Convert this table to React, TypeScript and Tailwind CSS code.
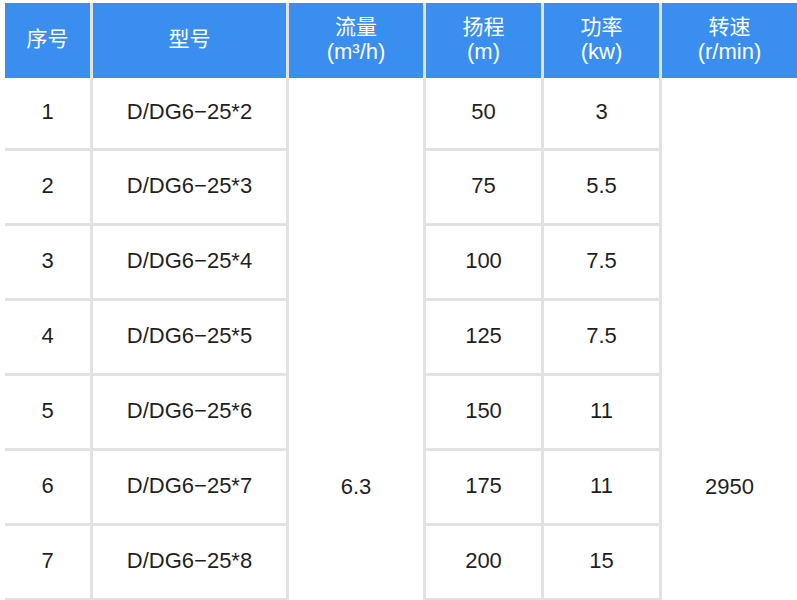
import { Fragment } from 'react'

const rows = [
  { no: '1', model: 'D/DG6−25*2', head: '50', power: '3' },
  { no: '2', model: 'D/DG6−25*3', head: '75', power: '5.5' },
  { no: '3', model: 'D/DG6−25*4', head: '100', power: '7.5' },
  { no: '4', model: 'D/DG6−25*5', head: '125', power: '7.5' },
  { no: '5', model: 'D/DG6−25*6', head: '150', power: '11' },
  { no: '6', model: 'D/DG6−25*7', head: '175', power: '11' },
  { no: '7', model: 'D/DG6−25*8', head: '200', power: '15' },
]

// rows below the fold, cropped by the viewport
const filler = [8, 9, 10, 11]

function Head({ top, unit }: { top: string; unit?: string }) {
  return (
    <div className="flex flex-col items-center justify-center bg-[#3a8ef0] pb-[4px] text-center leading-[25px] text-white">
      <span className="text-[21px]">{top}</span>
      {unit && <span className="text-[22px]">{unit}</span>}
    </div>
  )
}

function Cell({ children }: { children?: React.ReactNode }) {
  return <div className="flex items-center justify-center bg-white pb-[3px] text-[22px] text-[#1f1f1f]">{children}</div>
}

export default function App() {
  return (
    <div
      className="h-[600px] w-[797px] overflow-hidden bg-white pl-[5px] pt-[3px]"
      style={{ fontFamily: '"Liberation Sans", "Noto Sans CJK SC", sans-serif' }}
    >
      {/* Header */}
      <div className="grid h-[75px] grid-cols-[85px_193px_134px_115px_115px_135px] gap-x-[3px] bg-[#e2e2e2]">
        <Head top="序号" />
        <Head top="型号" />
        <Head top="流量" unit="(m³/h)" />
        <Head top="扬程" unit="(m)" />
        <Head top="功率" unit="(kw)" />
        <Head top="转速" unit="(r/min)" />
      </div>

      {/* Body */}
      <div className="grid grid-cols-[85px_193px_134px_115px_115px_135px] grid-rows-[70px_repeat(10,72px)] gap-[3px] bg-[#e2e2e2]">
        {rows.map((r, i) => (
          <Fragment key={r.no}>
            <Cell>{r.no}</Cell>
            <Cell>{r.model}</Cell>
            {i === 0 && (
              <div className="row-span-11 flex items-center justify-center bg-white pb-[3px] text-[22px] text-[#1f1f1f]">6.3</div>
            )}
            <Cell>{r.head}</Cell>
            <Cell>{r.power}</Cell>
            {i === 0 && (
              <div className="row-span-11 flex items-center justify-center bg-white pb-[3px] text-[22px] text-[#1f1f1f]">2950</div>
            )}
          </Fragment>
        ))}
        {filler.map((n) => (
          <Fragment key={n}>
            <Cell />
            <Cell />
            <Cell />
            <Cell />
          </Fragment>
        ))}
      </div>
    </div>
  )
}
